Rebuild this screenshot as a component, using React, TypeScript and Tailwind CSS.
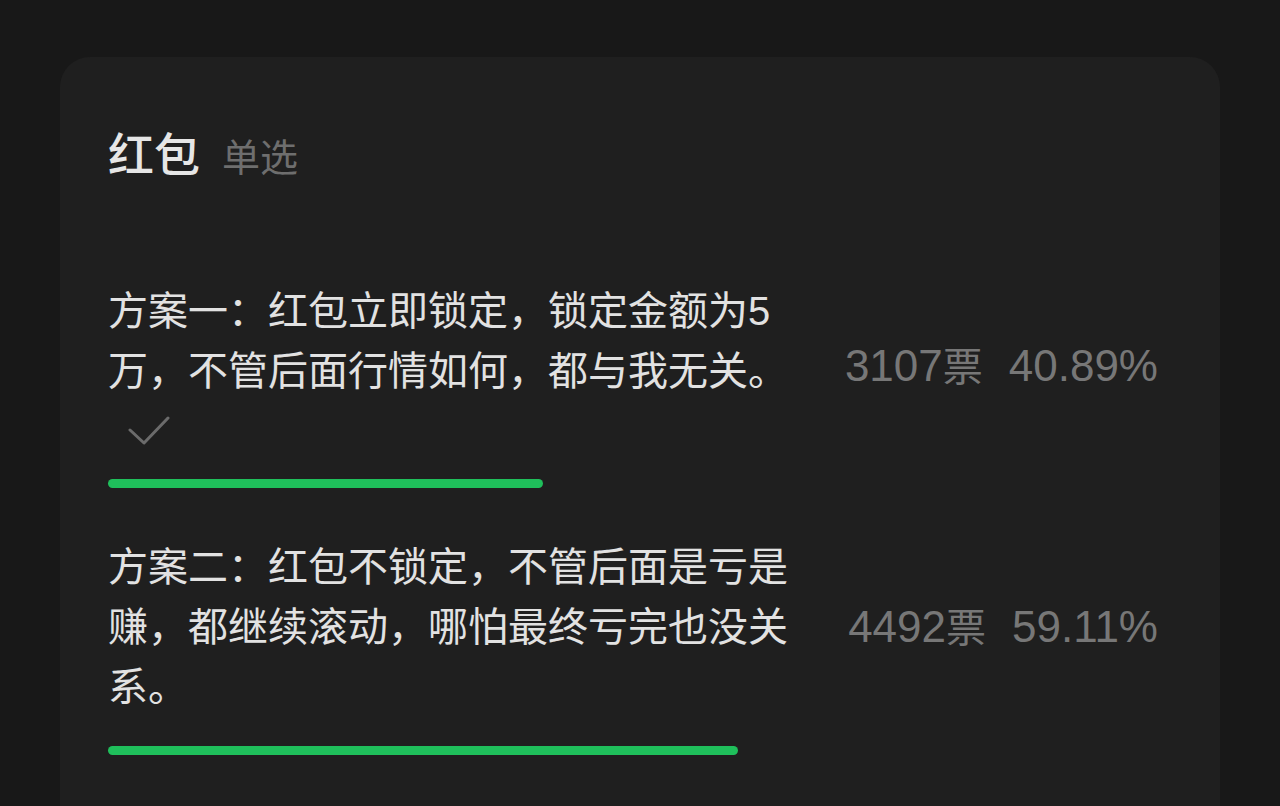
import React from 'react';

const font = { fontFamily: '"Liberation Sans", "Noto Sans CJK SC", sans-serif' };

type Option = {
  text: string;
  votes: number;
  percent: string;
  barWidth: number;
  selected: boolean;
};

const options: Option[] = [
  {
    text: '方案一：红包立即锁定，锁定金额为5万，不管后面行情如何，都与我无关。',
    votes: 3107,
    percent: '40.89%',
    barWidth: 435,
    selected: true,
  },
  {
    text: '方案二：红包不锁定，不管后面是亏是赚，都继续滚动，哪怕最终亏完也没关系。',
    votes: 4492,
    percent: '59.11%',
    barWidth: 630,
    selected: false,
  },
];

function Check() {
  return (
    <svg width="42" height="30" viewBox="0 0 42 30" fill="none">
      <polyline points="2,14 16,27 40,2" stroke="#6b6b6b" strokeWidth="3" strokeLinecap="round" strokeLinejoin="round" />
    </svg>
  );
}

function PollOption({ o }: { o: Option }) {
  return (
    <div className="flex flex-col">
      <div className="flex items-center">
        <div className="w-[690px] flex flex-col">
          <p className="text-[40px] leading-[60px] text-[#e2e2e2]">{o.text}</p>
          {o.selected && (
            <div className="h-[40px] mt-[10px] pl-[20px] flex items-center">
              <Check />
            </div>
          )}
        </div>
        <div className="flex-1 flex justify-end items-baseline gap-[26px] pr-[12px] text-[44px] text-[#777777]">
          <span>
            {o.votes}
            <span className="text-[40px]">票</span>
          </span>
          <span>{o.percent}</span>
        </div>
      </div>
      <div
        className={`h-[9px] rounded-full bg-[#1fbf5b] ${o.selected ? 'mt-[28px]' : 'mt-[29px]'}`}
        style={{ width: o.barWidth }}
      />
    </div>
  );
}

export default function App() {
  return (
    <div className="w-[1280px] h-[806px] overflow-hidden bg-[#181818] pt-[57px] px-[60px]" style={font}>
      <div className="h-[900px] rounded-[30px] bg-[#1f1f1f] pt-[64px] pl-[48px] pr-[50px]">
        <div className="flex items-baseline gap-[22px]">
          <h1 className="text-[46px] leading-[69px] font-medium text-[#e6e6e6]">红包</h1>
          <span className="text-[38px] text-[#6e6e6e]">单选</span>
        </div>
        <div className="mt-[91px] flex flex-col gap-[49px]">
          {options.map((o) => (
            <PollOption key={o.votes} o={o} />
          ))}
        </div>
      </div>
    </div>
  );
}
